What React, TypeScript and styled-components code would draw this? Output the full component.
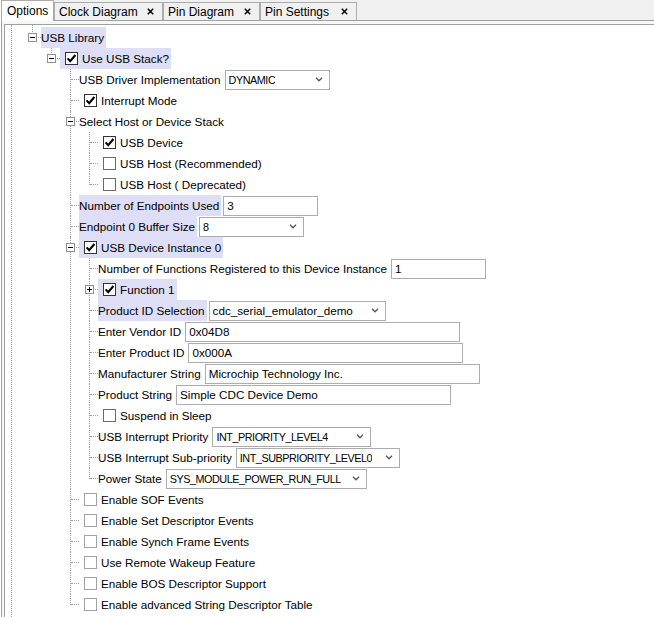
import styled, { createGlobalStyle, css } from 'styled-components';

const LINE = '#a0a0a0';
const HL = '#dedef6';

const GlobalStyle = createGlobalStyle`
  html, body {
    margin: 0;
    padding: 0;
    height: 100%;
    overflow: hidden;
    background: #fff;
  }
  body {
    font-family: "Liberation Sans", Arial, sans-serif;
    font-size: 11.7px;
    color: #000;
  }
  #root {
    height: 100%;
  }
`;

type Tone = 'dark' | 'mid' | 'light';

type Control = { kind: 'input' | 'select'; value: string; width: number };

type TreeItem = {
  label: string;
  expander?: 'minus' | 'plus';
  check?: boolean;
  tone?: Tone;
  hl?: boolean;
  control?: Control;
  children?: TreeItem[];
};

const Window = styled.div`
  height: 100%;
  display: flex;
  flex-direction: column;
  padding-left: 1px;
  box-sizing: border-box;
`;

const TabStrip = styled.div`
  flex-shrink: 0;
  display: flex;
  align-items: flex-end;
  height: 20px;
  background: #f0f0f0;
  border-bottom: 1px solid ${LINE};
`;

const Tab = styled.div<{ $active?: boolean; $width: number }>`
  box-sizing: border-box;
  width: ${(p) => p.$width}px;
  height: 18px;
  display: flex;
  align-items: center;
  justify-content: space-between;
  padding: 0 8px 0 4px;
  border: 1px solid #acacac;
  border-bottom: none;
  background: #f0f0f0;
  white-space: nowrap;
  font-size: 12px;
  ${(p) =>
    p.$active &&
    css`
      height: 21px;
      margin-bottom: -1px;
      background: #fff;
      padding-left: 5px;
    `}
`;

const Close = styled.svg`
  flex-shrink: 0;
`;

const Panel = styled.div`
  flex: 1;
  display: flex;
  border-left: 1px solid ${LINE};
  padding: 3px 0 0 2px;
  background: #f7f7f7;
  min-height: 0;
`;

const Inner = styled.div`
  flex: 1;
  border-top: 1px solid ${LINE};
  border-left: 1px solid ${LINE};
  background: #fff;
  overflow: hidden;
`;

const Trunk = styled.div`
  height: 100%;
  margin-left: 6px;
  padding: 2px 0 0 20px;
  border-left: 1px dotted ${LINE};
  box-sizing: border-box;
`;

const Node = styled.div<{ $last: boolean; $above?: boolean }>`
  position: relative;
  &::before {
    content: '';
    position: absolute;
    left: 0;
    top: ${(p) => (p.$above ? -4 : 0)}px;
    ${(p) => (p.$last ? `height: ${p.$above ? 15 : 11}px;` : 'bottom: 0;')}
    border-left: 1px dotted ${LINE};
  }
`;

const Row = styled.div`
  position: relative;
  height: 21px;
  display: flex;
  align-items: center;
  padding-left: 9px;
  white-space: nowrap;
  &::before {
    content: '';
    position: absolute;
    left: 1px;
    top: 10px;
    width: 8px;
    border-top: 1px dotted ${LINE};
  }
`;

const Expander = styled.span<{ $plus?: boolean }>`
  position: absolute;
  left: -4px;
  top: 6px;
  width: 9px;
  height: 9px;
  box-sizing: border-box;
  border: 1px solid #919191;
  background: #fff;
  z-index: 1;
  &::before {
    content: '';
    position: absolute;
    left: 1px;
    top: 3px;
    width: 5px;
    height: 1px;
    background: #000;
  }
  ${(p) =>
    p.$plus &&
    css`
      &::after {
        content: '';
        position: absolute;
        left: 3px;
        top: 1px;
        width: 1px;
        height: 5px;
        background: #000;
      }
    `}
`;

const Item = styled.span<{ $hl?: boolean; $boxed?: boolean }>`
  display: inline-flex;
  align-items: center;
  gap: 4px;
  height: 21px;
  padding: 0 2px 0 ${(p) => (p.$boxed ? 5 : 0)}px;
  background: ${(p) => (p.$hl ? HL : 'transparent')};
`;

const toneColor: Record<Tone, string> = {
  dark: '#333333',
  mid: '#6a6a6a',
  light: '#a2a2a2',
};

const Box = styled.span<{ $tone: Tone }>`
  width: 13px;
  height: 13px;
  box-sizing: border-box;
  border: 1px solid ${(p) => toneColor[p.$tone]};
  background: #fff;
  display: inline-flex;
  align-items: center;
  justify-content: center;
  flex-shrink: 0;
`;

const TextField = styled.input<{ $width: number }>`
  box-sizing: border-box;
  width: ${(p) => p.$width}px;
  height: 20px;
  margin: 0 0 0 2px;
  padding: 0 3px;
  border: 1px solid #abadb3;
  background: #fff;
  font-family: inherit;
  font-size: 11.7px;
  color: #000;
  outline: none;
`;

const Combo = styled.div<{ $width: number }>`
  box-sizing: border-box;
  width: ${(p) => p.$width}px;
  height: 20px;
  margin-left: 2px;
  padding: 0 6px 0 3px;
  display: flex;
  align-items: center;
  justify-content: space-between;
  gap: 4px;
  border: 1px solid #acacac;
  background: #fff;
`;

const ComboText = styled.span<{ $caps?: boolean }>`
  overflow: hidden;
  white-space: nowrap;
  font-size: ${(p) => (p.$caps ? 10.8 : 11.7)}px;
  letter-spacing: ${(p) => (p.$caps ? -0.45 : 0)}px;
`;

const tree: TreeItem = {
  label: 'USB Library',
  expander: 'minus',
  hl: true,
  children: [
    {
      label: 'Use USB Stack?',
      expander: 'minus',
      check: true,
      hl: true,
      children: [
        { label: 'USB Driver Implementation', control: { kind: 'select', value: 'DYNAMIC', width: 105 } },
        { label: 'Interrupt Mode', check: true },
        {
          label: 'Select Host or Device Stack',
          expander: 'minus',
          children: [
            { label: 'USB Device', check: true },
            { label: 'USB Host (Recommended)', check: false, tone: 'mid' },
            { label: 'USB Host ( Deprecated)', check: false, tone: 'mid' },
          ],
        },
        { label: 'Number of Endpoints Used', hl: true, control: { kind: 'input', value: '3', width: 95 } },
        { label: 'Endpoint 0 Buffer Size', hl: true, control: { kind: 'select', value: '8', width: 105 } },
        {
          label: 'USB Device Instance 0',
          expander: 'minus',
          check: true,
          hl: true,
          children: [
            {
              label: 'Number of Functions Registered to this Device Instance',
              control: { kind: 'input', value: '1', width: 95 },
            },
            { label: 'Function 1', expander: 'plus', check: true, hl: true },
            {
              label: 'Product ID Selection',
              hl: true,
              control: { kind: 'select', value: 'cdc_serial_emulator_demo', width: 177 },
            },
            { label: 'Enter Vendor ID', control: { kind: 'input', value: '0x04D8', width: 275 } },
            { label: 'Enter Product ID', control: { kind: 'input', value: '0x000A', width: 275 } },
            {
              label: 'Manufacturer String',
              control: { kind: 'input', value: 'Microchip Technology Inc.', width: 275 },
            },
            {
              label: 'Product String',
              control: { kind: 'input', value: 'Simple CDC Device Demo', width: 275 },
            },
            { label: 'Suspend in Sleep', check: false, tone: 'mid' },
            {
              label: 'USB Interrupt Priority',
              control: { kind: 'select', value: 'INT_PRIORITY_LEVEL4', width: 159 },
            },
            {
              label: 'USB Interrupt Sub-priority',
              control: { kind: 'select', value: 'INT_SUBPRIORITY_LEVEL0', width: 164 },
            },
            {
              label: 'Power State',
              control: { kind: 'select', value: 'SYS_MODULE_POWER_RUN_FULL', width: 201 },
            },
          ],
        },
        { label: 'Enable SOF Events', check: false, tone: 'light' },
        { label: 'Enable Set Descriptor Events', check: false, tone: 'light' },
        { label: 'Enable Synch Frame Events', check: false, tone: 'light' },
        { label: 'Use Remote Wakeup Feature', check: false, tone: 'light' },
        { label: 'Enable BOS Descriptor Support', check: false, tone: 'light' },
        { label: 'Enable advanced String Descriptor Table', check: false, tone: 'light' },
      ],
    },
  ],
};

const tabs = [
  { label: 'Options', width: 53, active: true },
  { label: 'Clock Diagram', width: 109 },
  { label: 'Pin Diagram', width: 97 },
  { label: 'Pin Settings', width: 97 },
];

function CheckBox({ checked, tone }: { checked: boolean; tone: Tone }) {
  return (
    <Box $tone={tone}>
      {checked && (
        <svg width="11" height="11" viewBox="0 0 11 11">
          <path d="M1.6 5.4 L4.2 8.2 L9.4 2" fill="none" stroke="#000" strokeWidth="2.1" />
        </svg>
      )}
    </Box>
  );
}

function Chevron() {
  return (
    <svg width="8" height="5" viewBox="0 0 8 5" style={{ flexShrink: 0 }}>
      <path d="M1 0.8 L4 3.8 L7 0.8" fill="none" stroke="#555" strokeWidth="1.3" />
    </svg>
  );
}

function ControlView({ control }: { control: Control }) {
  if (control.kind === 'input') {
    return <TextField $width={control.width} defaultValue={control.value} readOnly />;
  }
  const caps = control.value === control.value.toUpperCase();
  return (
    <Combo $width={control.width}>
      <ComboText $caps={caps}>{control.value}</ComboText>
      <Chevron />
    </Combo>
  );
}

const Children = styled.div`
  margin-left: 19px;
`;

function TreeNode({ item, last, above }: { item: TreeItem; last: boolean; above?: boolean }) {
  const boxed = item.check !== undefined;
  return (
    <Node $last={last} $above={above}>
      <Row>
        {item.expander && <Expander $plus={item.expander === 'plus'} />}
        <Item $hl={item.hl} $boxed={boxed}>
          {boxed && <CheckBox checked={!!item.check} tone={item.tone ?? 'dark'} />}
          <span>{item.label}</span>
        </Item>
        {item.control && <ControlView control={item.control} />}
      </Row>
      {item.children && (
        <Children>
          {item.children.map((child, i) => (
            <TreeNode key={child.label} item={child} last={i === item.children!.length - 1} />
          ))}
        </Children>
      )}
    </Node>
  );
}

export default function App() {
  return (
    <>
      <GlobalStyle />
      <Window>
        <TabStrip>
          {tabs.map((t) => (
            <Tab key={t.label} $active={t.active} $width={t.width}>
              <span>{t.label}</span>
              {!t.active && (
                <Close width="7" height="7" viewBox="0 0 7 7">
                  <path d="M0.8 0.8 L6.2 6.2 M6.2 0.8 L0.8 6.2" stroke="#000" strokeWidth="1.5" />
                </Close>
              )}
            </Tab>
          ))}
        </TabStrip>
        <Panel>
          <Inner>
            <Trunk>
              <TreeNode item={tree} last above />
            </Trunk>
          </Inner>
        </Panel>
      </Window>
    </>
  );
}
